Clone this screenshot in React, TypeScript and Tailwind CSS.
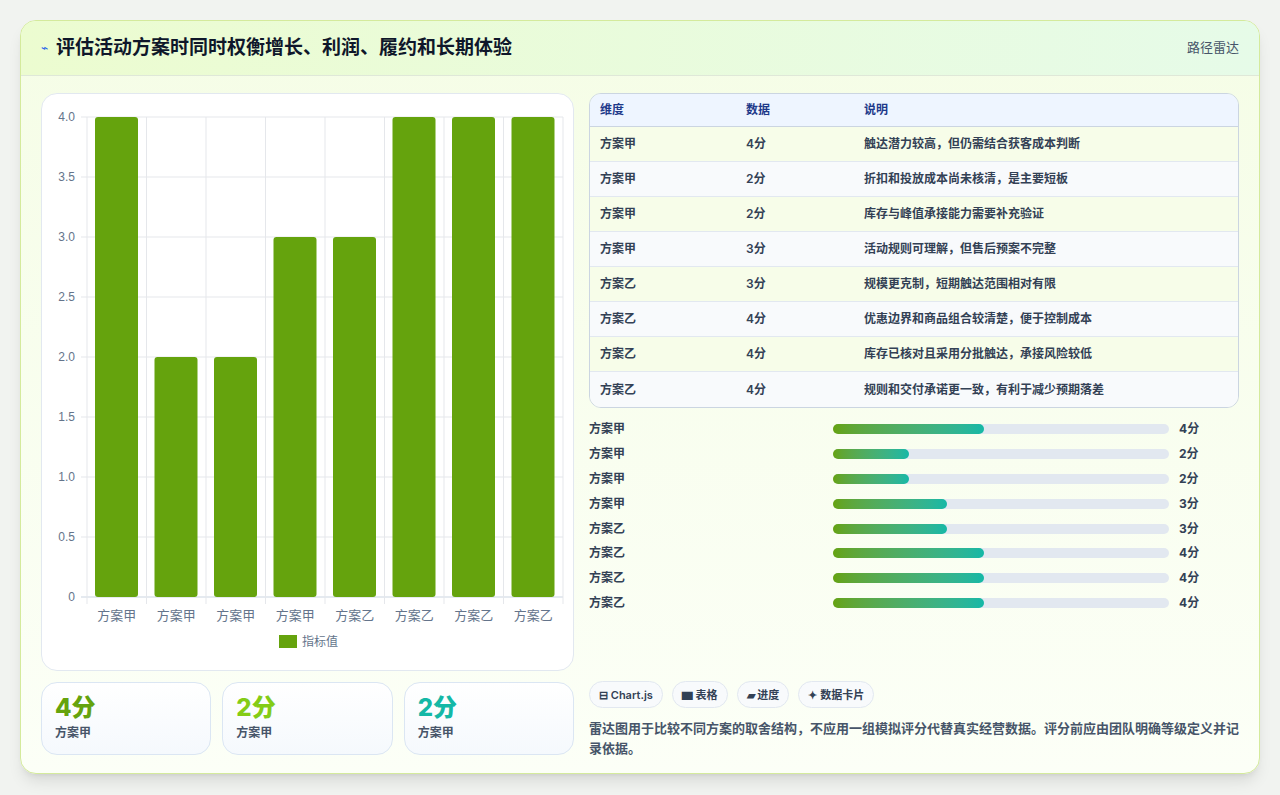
import React from "react";

const rows = [
  ["方案甲", 4, "触达潜力较高，但仍需结合获客成本判断"],
  ["方案甲", 2, "折扣和投放成本尚未核清，是主要短板"],
  ["方案甲", 2, "库存与峰值承接能力需要补充验证"],
  ["方案甲", 3, "活动规则可理解，但售后预案不完整"],
  ["方案乙", 3, "规模更克制，短期触达范围相对有限"],
  ["方案乙", 4, "优惠边界和商品组合较清楚，便于控制成本"],
  ["方案乙", 4, "库存已核对且采用分批触达，承接风险较低"],
  ["方案乙", 4, "规则和交付承诺更一致，有利于减少预期落差"],
] as const;

const pct: Record<number, number> = { 4: 45, 3: 34, 2: 22.5 };

function Chart() {
  const W = 533, H = 577;
  const x0 = 45, x1 = 521, yTop = 23, yBot = 503;
  const cw = (x1 - x0) / 8;
  const ticks = [4, 3.5, 3, 2.5, 2, 1.5, 1, 0.5, 0];
  return (
    <svg width={W} height={H} className="block">
      {ticks.map((t) => {
        const y = yBot - t * 120;
        return (
          <g key={t}>
            <line x1={x0 - 6} x2={x1} y1={y} y2={y} stroke={t === 0 ? "#cbd5e1" : "#e5e7eb"} />
            <text x={x0 - 12} y={y + 4} textAnchor="end" fontSize="12" fill="#64748b" fontFamily="Liberation Sans, sans-serif">
              {t === 0 ? "0" : t.toFixed(1)}
            </text>
          </g>
        );
      })}
      {Array.from({ length: 9 }).map((_, i) => (
        <line key={i} x1={x0 + i * cw} x2={x0 + i * cw} y1={yTop} y2={yBot + 7} stroke="#e5e7eb" />
      ))}
      {rows.map((r, i) => {
        const h = r[1] * 120;
        const bx = x0 + i * cw + 8;
        return (
          <g key={i}>
            <rect x={bx} y={yBot - h} width={43} height={h} rx={3} fill="#65a30d" />
            <text x={x0 + i * cw + cw / 2} y={yBot + 23} textAnchor="middle" fontSize="13" fill="#64748b" fontFamily="Noto Sans CJK SC, sans-serif">
              {r[0]}
            </text>
          </g>
        );
      })}
      <rect x={237} y={541} width={18} height={13} fill="#65a30d" />
      <text x={260} y={552} fontSize="12" fill="#64748b" fontFamily="Noto Sans CJK SC, sans-serif">指标值</text>
    </svg>
  );
}

export default function App() {
  return (
    <div className="min-h-[795px] w-[1280px] bg-[#f1f3f0] pt-5" style={{ fontFamily: "Inter, 'Noto Sans CJK SC', sans-serif" }}>
      <div className="mx-5 h-[754px] overflow-hidden rounded-2xl border border-[#d4ea9c] bg-gradient-to-b from-[#f5fde6] to-[#fcfff7] shadow-lg">
        <div className="flex h-[55px] items-center justify-between border-b border-[#dfe8d8] bg-gradient-to-r from-[#ecfcd0] to-[#e6fbe8] px-5">
          <div className="flex items-center gap-2">
            <span className="text-[12px] text-[#2563eb]">⌁</span>
            <span className="text-[19px] font-bold text-[#0f172a]">评估活动方案时同时权衡增长、利润、履约和长期体验</span>
          </div>
          <span className="text-[13px] text-[#475569]">路径雷达</span>
        </div>
        <div className="flex gap-[15px] px-5 pt-[17px]">
          <div className="flex w-[533px] flex-col gap-[11px]">
            <div className="h-[578px] rounded-2xl border border-[#e2e8f0] bg-white">
              <Chart />
            </div>
            <div className="grid grid-cols-3 gap-[11px]">
              {[
                ["4分", "text-[#65a30d]"],
                ["2分", "text-[#84cc16]"],
                ["2分", "text-[#14b8a6]"],
              ].map(([v, c], i) => (
                <div key={i} className="h-[73px] rounded-2xl border border-[#dbe6f3] bg-gradient-to-b from-white to-[#f5f9fd] px-[13px] pt-[9px]">
                  <div className={`text-[24px] font-extrabold leading-[32px] ${c}`}>{v}</div>
                  <div className="text-[12px] font-semibold text-[#475569]">方案甲</div>
                </div>
              ))}
            </div>
          </div>
          <div className="flex w-[652px] flex-col">
            <div className="overflow-hidden rounded-xl border border-[#cbd5e1] text-[12px] font-semibold text-[#334155]">
              <div className="flex h-[33px] items-center border-b border-[#cbd5e1] bg-[#eef5ff] text-[#1e3a8a]">
                <div className="w-[156px] pl-[10px]">维度</div>
                <div className="w-[118px]">数据</div>
                <div>说明</div>
              </div>
              {rows.map((r, i) => (
                <div key={i} className={`flex h-[35px] items-center ${i < 7 ? "border-b border-[#e2e8f0]" : ""} ${i % 2 === 0 ? "bg-[#f7fde9]" : "bg-[#f8fafc]"}`}>
                  <div className="w-[156px] pl-[10px]">{r[0]}</div>
                  <div className="w-[118px]">{r[1]}分</div>
                  <div>{r[2]}</div>
                </div>
              ))}
            </div>
            <div className="mt-[9px] flex flex-col">
              {rows.map((r, i) => (
                <div key={i} className="flex h-[24.8px] items-center text-[12px] font-bold text-[#334155]">
                  <div className="w-[244px]">{r[0]}</div>
                  <div className="h-[10px] w-[336px] rounded-full bg-[#e2e8f0]">
                    <div className="h-full rounded-full bg-gradient-to-r from-[#65a30d] to-[#14b8a6]" style={{ width: `${pct[r[1]]}%` }} />
                  </div>
                  <div className="ml-[10px]">{r[1]}分</div>
                </div>
              ))}
            </div>
            <div className="mt-[66px] flex gap-[9px]">
              {["⊟ Chart.js", "▆ 表格", "▰ 进度", "✦ 数据卡片"].map((t) => (
                <span key={t} className="flex h-[27px] items-center rounded-full border border-[#e2e8f0] bg-[#f8fafc] px-[9px] text-[11px] font-semibold text-[#334155]">
                  {t}
                </span>
              ))}
            </div>
            <p className="mt-[10px] text-[13px] font-semibold leading-[20px] text-[#475569]">
              雷达图用于比较不同方案的取舍结构，不应用一组模拟评分代替真实经营数据。评分前应由团队明确等级定义并记录依据。
            </p>
          </div>
        </div>
      </div>
    </div>
  );
}
